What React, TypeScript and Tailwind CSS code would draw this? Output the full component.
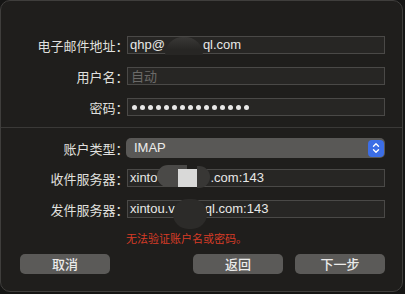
import React from 'react'

const cjk = "font-['Noto_Sans_CJK_SC',sans-serif]"
const latin = "font-['Liberation_Sans','Noto_Sans_CJK_SC',sans-serif]"

const Label = ({ children }: { children: React.ReactNode }) => (
	<div
		className={`w-[121px] shrink-0 text-right text-[13px] leading-none text-[#e0e0df] [font-feature-settings:'halt'] ${cjk}`}
	>
		{children}
	</div>
)

const Field = ({ children }: { children: React.ReactNode }) => (
	<div
		className={`relative ml-[5px] flex h-[18px] w-[258px] items-center border border-[#4a4947] bg-[#272624] pl-[2px] text-[13px] text-[#e8e8e7] ${latin}`}
	>
		{children}
	</div>
)

const Button = ({ label }: { label: string }) => (
	<button
		className={`flex h-[20px] w-[90px] items-center justify-center rounded-[5px] bg-[#5b5a58] text-[13px] font-medium text-[#ebebea] ${cjk}`}
	>
		{label}
	</button>
)

export default function App() {
	return (
		<div className="h-[294px] w-[405px] bg-[#151514]">
			<div className="flex h-[292px] w-[403px] flex-col overflow-hidden rounded-[10px] border border-[#3f3e3c] bg-[#1f1e1c]">
				<div className="flex flex-col gap-[13px] pt-[35px]">
					<div className="flex items-center">
						<Label>电子邮件地址：</Label>
						<Field>
							<span>qhp@</span>
							<span className="inline-block h-[18px] w-[38px] self-start rounded-t-[18px] bg-[linear-gradient(#3a3937,#272624_70%)]" />
							<span>ql.com</span>
						</Field>
					</div>
					<div className="flex items-center">
						<Label>用户名：</Label>
						<Field>
							<span className={`pl-[1px] text-[#6b6a68] ${cjk}`}>自动</span>
						</Field>
					</div>
					<div className="flex items-center">
						<Label>密码：</Label>
						<Field>
							<div className="flex gap-[3px] pl-[2px]">
								{Array.from({ length: 15 }).map((_, i) => (
									<div key={i} className="h-[5px] w-[5px] rounded-full bg-[#e8e8e7]" />
								))}
							</div>
						</Field>
					</div>
				</div>

				<div className="mt-[11px] h-px w-full bg-[#3a3937]" />

				<div className="flex flex-col pt-[10px]">
					<div className="flex items-center">
						<Label>账户类型：</Label>
						<div
							className={`ml-[4px] flex h-[20px] w-[259px] items-center justify-between rounded-[5px] bg-[#595856] pl-[8px] pr-[1px] text-[13px] text-[#ececeb] ${latin}`}
						>
							<span>IMAP</span>
							<div className="flex h-[17px] w-[16px] items-center justify-center rounded-[4px] bg-[#3c6ee6]">
								<svg width="8" height="12" viewBox="0 0 8 12" fill="none" stroke="white" strokeWidth="1.4" strokeLinecap="round" strokeLinejoin="round">
									<path d="M1.5 4.2 L4 1.7 L6.5 4.2" />
									<path d="M1.5 7.8 L4 10.3 L6.5 7.8" />
								</svg>
							</div>
						</div>
					</div>
					<div className="mt-[11px] flex items-center">
						<Label>收件服务器：</Label>
						<Field>
							<span>xinto</span>
							<span className="relative inline-block h-[18px] w-[53px]">
								<span className="absolute left-0 top-[-4px] h-[22px] w-[30px] rounded-l-full bg-[#4a4947]" />
								<span className="absolute left-[21px] top-0 h-[18px] w-[20px] bg-[#d9d9d8]" />
								<span className="absolute right-0 top-[-3px] h-[22px] w-[13px] rounded-r-full bg-[#383735]" />
							</span>
							<span>.com:143</span>
						</Field>
					</div>
					<div className="mt-[13px] flex items-center">
						<Label>发件服务器：</Label>
						<Field>
							<span>xintou.v</span>
							<span className="relative inline-block h-[18px] w-[30px]">
								<span className="absolute left-[-2px] top-[-1px] h-[30px] w-[34px] rounded-full bg-[#2c2b29]" />
							</span>
							<span>ql.com:143</span>
						</Field>
					</div>
				</div>

				<div className={`mt-[12px] pl-[125px] text-[11px] leading-[16px] text-[#d83c27] ${cjk}`}>
					无法验证账户名或密码。
				</div>

				<div className="mt-[8px] flex items-center justify-between pl-[19px] pr-[17px]">
					<Button label="取消" />
					<div className="flex gap-[12px]">
						<Button label="返回" />
						<Button label="下一步" />
					</div>
				</div>
			</div>
		</div>
	)
}
